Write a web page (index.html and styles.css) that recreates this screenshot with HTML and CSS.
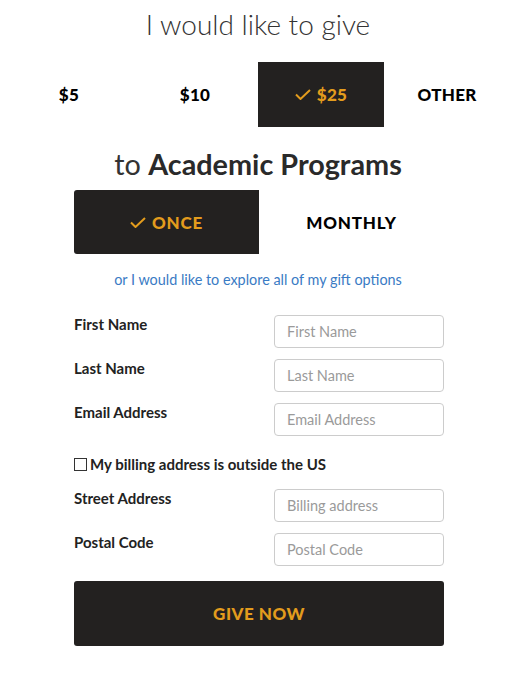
FILE: index.html
```html
<!DOCTYPE html>
<html lang="en">
<head>
<meta charset="utf-8">
<title>Give</title>
<link rel="stylesheet" href="styles.css">
</head>
<body>
<div class="page">
  <h1 class="title">I would like to give</h1>
  <div class="amounts">
    <div class="amount">$5</div>
    <div class="amount">$10</div>
    <div class="amount selected"><svg class="check" viewBox="0 0 16 11" width="16" height="11"><path d="M1 5.5 L5.5 10 L15 1" fill="none" stroke="#e39c1d" stroke-width="2"/></svg>$25</div>
    <div class="amount">OTHER</div>
  </div>
  <h2 class="subtitle">to <strong>Academic Programs</strong></h2>
  <div class="freq">
    <div class="freq-item selected"><svg class="check" viewBox="0 0 16 11" width="16" height="11"><path d="M1 5.5 L5.5 10 L15 1" fill="none" stroke="#e39c1d" stroke-width="2"/></svg>ONCE</div>
    <div class="freq-item">MONTHLY</div>
  </div>
  <p class="explore"><a href="#">or I would like to explore all of my gift options</a></p>
  <form class="form">
    <div class="row"><label class="label">First Name</label><input class="input" placeholder="First Name"></div>
    <div class="row"><label class="label">Last Name</label><input class="input" placeholder="Last Name"></div>
    <div class="row"><label class="label">Email Address</label><input class="input" placeholder="Email Address"></div>
    <div class="check-row"><span class="box"></span>My billing address is outside the US</div>
    <div class="row first"><label class="label">Street Address</label><input class="input" placeholder="Billing address"></div>
    <div class="row"><label class="label">Postal Code</label><input class="input" placeholder="Postal Code"></div>
    <button class="give" type="button">GIVE NOW</button>
  </form>
</div>
</body>
</html>
```

FILE: styles.css
```css
* { box-sizing: border-box; }
body {
  margin: 0;
  font-family: Lato, "Open Sans", sans-serif;
  color: #222;
  background: #fff;
}
.page {
  width: 504px;
  margin-left: 6px;
}
.title {
  margin: 7px 0 0;
  font-size: 28px;
  font-weight: 300;
  line-height: 34px;
  color: #333;
  text-align: center;
}
.amounts {
  display: flex;
  margin-top: 21px;
}
.amount {
  width: 126px;
  height: 65px;
  display: flex;
  align-items: center;
  justify-content: center;
  font-size: 17px;
  font-weight: 900;
  color: #000;
  letter-spacing: 0.3px;
}
.amount.selected {
  background: #232120;
  color: #e39c1d;
}
.check {
  margin-right: 6px;
  display: block;
}
.subtitle {
  margin: 20px 0 0;
  font-size: 28.8px;
  font-weight: 400;
  line-height: 34px;
  color: #333;
  text-align: center;
}
.subtitle strong { font-weight: 700; color: #2a2a2a; }
.freq {
  display: flex;
  width: 370px;
  margin: 9px 0 0 68px;
}
.freq-item {
  width: 185px;
  height: 64px;
  display: flex;
  align-items: center;
  justify-content: center;
  font-size: 17px;
  font-weight: 900;
  letter-spacing: 0.8px;
  color: #000;
}
.freq-item.selected {
  background: #232120;
  color: #e39c1d;
  border-radius: 3px 0 0 3px;
}
.explore {
  margin: 16px 0 0;
  line-height: 20px;
  font-size: 14.4px;
  text-align: center;
}
.explore a {
  color: #3a7bc4;
  text-decoration: none;
}
.form {
  width: 370px;
  margin: 25px 0 0 68px;
}
.row {
  display: flex;
  justify-content: space-between;
  align-items: flex-start;
  margin-bottom: 11px;
}
.label {
  font-size: 15px;
  font-weight: 700;
  line-height: 18px;
  color: #222;
}
.input {
  width: 170px;
  height: 33px;
  border: 1px solid #cccccc;
  border-radius: 4px;
  padding: 0 12px;
  font-family: Lato, "Open Sans", sans-serif;
  font-size: 14.5px;
  color: #333;
}
.input::placeholder { color: #9a9a9a; }
.check-row {
  display: flex;
  align-items: center;
  margin-top: 18px;
  height: 20px;
  font-size: 15px;
  font-weight: 700;
  color: #222;
}
.box {
  width: 13px;
  height: 13px;
  border: 1px solid #333;
  margin-right: 3px;
  background: #fff;
}
.row.first { margin-top: 15px; }
.give {
  display: block;
  width: 370px;
  height: 65px;
  margin-top: 15px;
  border: none;
  border-radius: 3px;
  background: #232120;
  color: #e39c1d;
  font-family: Lato, "Open Sans", sans-serif;
  font-size: 17px;
  font-weight: 900;
  letter-spacing: 0.5px;
}
```
